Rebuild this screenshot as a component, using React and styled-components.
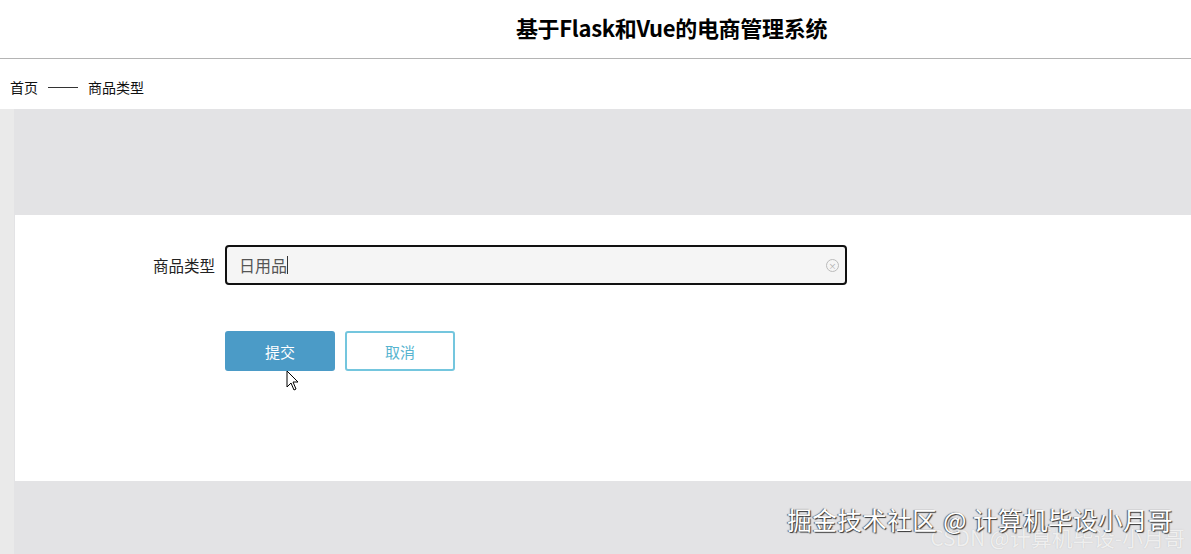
import React from 'react'
import styled, { createGlobalStyle } from 'styled-components'

const GlobalStyle = createGlobalStyle`
    html, body {
        margin: 0;
        padding: 0;
        background: #e3e3e5;
        font-family: "Noto Sans CJK SC", "Liberation Sans", sans-serif;
    }
`

const Page = styled.div`
    position: relative;
    width: 1191px;
    height: 554px;
    overflow: hidden;
    display: flex;
    flex-direction: column;
    background: #e3e3e5;
`
const Header = styled.header`
    height: 58px;
    background: #fff;
    border-bottom: 1px solid #b4b4b4;
    display: flex;
    align-items: center;
    justify-content: center;
    padding-left: 152px;
`
const Title = styled.h1`
    margin: 0 0 4px;
    font-size: 22px;
    font-weight: 700;
    color: #000;
    letter-spacing: -0.3px;
`
const Crumbs = styled.nav`
    height: 50px;
    background: #fff;
    display: flex;
    align-items: center;
    padding: 6px 0 0 10px;
    box-sizing: border-box;
    font-size: 14px;
    color: #111;
`
const Dash = styled.span`
    width: 30px;
    height: 1px;
    background: #333;
    margin: 0 10px;
`
const Body = styled.main`
    flex: 1;
    display: flex;
    flex-direction: column;
    padding-top: 106px;
    background: linear-gradient(to right, #eaeaea 0, #eaeaea 14px, #e3e3e5 14px);
`
const Card = styled.section`
    margin-left: 15px;
    height: 266px;
    background: #fff;
    padding: 30px 0 0 0;
    box-sizing: border-box;
`
const Row = styled.div`
    display: flex;
    align-items: center;
    gap: 10px;
`
const Label = styled.label`
    width: 200px;
    text-align: right;
    font-size: 15.5px;
    color: #222;
`
const Field = styled.div`
    width: 622px;
    height: 40px;
    box-sizing: border-box;
    border: 2px solid #111;
    border-radius: 4px;
    background: #f5f5f5;
    display: flex;
    align-items: center;
    padding: 0 12px;
    font-size: 16px;
    color: #555;
`
const Value = styled.span`
    flex: 1;
    display: flex;
    align-items: center;
`
const Caret = styled.span`
    width: 1px;
    height: 18px;
    background: #333;
`
const Clear = styled.span`
    width: 11px;
    height: 11px;
    border: 1px solid #bbb;
    border-radius: 50%;
    color: #aaa;
    font-size: 8px;
    line-height: 11px;
    text-align: center;
    margin-right: -6px;
`
const Buttons = styled.div`
    display: flex;
    gap: 10px;
    margin: 46px 0 0 210px;
`
const Button = styled.button`
    width: 110px;
    height: 40px;
    box-sizing: border-box;
    border-radius: 3px;
    font-family: inherit;
    font-size: 15px;
    cursor: pointer;
    border: 2px solid ${p => (p.primary ? '#4b9bc7' : '#74c6de')};
    background: ${p => (p.primary ? '#4b9bc7' : '#fff')};
    color: ${p => (p.primary ? '#fff' : '#56b4cf')};
`
const Cursor = styled.svg`
    position: absolute;
    left: 286px;
    top: 370px;
`
const Watermark = styled.div`
    position: absolute;
    right: 18px;
    bottom: 17px;
    font-size: 24.5px;
    color: #fff;
    text-shadow: 1px 1px 1px #333, -1px 0 1px #555;
    letter-spacing: 0.5px;
`
const Csdn = styled.div`
    position: absolute;
    right: 6px;
    bottom: 2px;
    font-size: 21px;
    color: rgba(255, 255, 255, 0.75);
    text-shadow: 0 0 1px #bbb;
`

export default function App() {
    return (
        <Page>
            <GlobalStyle />
            <Header>
                <Title>基于Flask和Vue的电商管理系统</Title>
            </Header>
            <Crumbs>
                <span>首页</span>
                <Dash />
                <span>商品类型</span>
            </Crumbs>
            <Body>
                <Card>
                    <Row>
                        <Label>商品类型</Label>
                        <Field>
                            <Value>日用品<Caret /></Value>
                            <Clear>×</Clear>
                        </Field>
                    </Row>
                    <Buttons>
                        <Button primary>提交</Button>
                        <Button>取消</Button>
                    </Buttons>
                </Card>
            </Body>
            <Cursor width="14" height="22" viewBox="0 0 14 22">
                <path d="M1 1 L1 17 L5 13 L8 20 L10 19 L7 12 L12 12 Z" fill="#fff" stroke="#000" strokeWidth="1" />
            </Cursor>
            <Csdn>CSDN @计算机毕设-小月哥</Csdn>
            <Watermark>掘金技术社区 @ 计算机毕设小月哥</Watermark>
        </Page>
    )
}
